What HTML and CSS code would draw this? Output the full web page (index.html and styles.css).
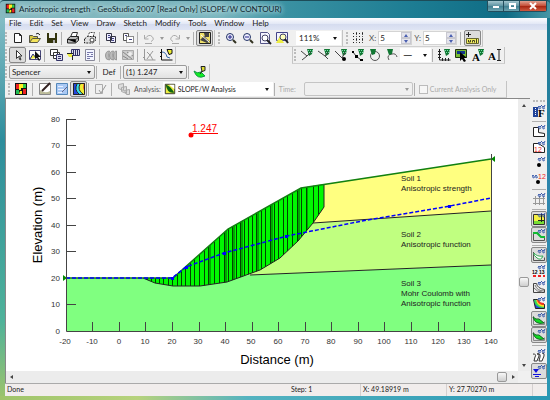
FILE: index.html
```html
<!DOCTYPE html>
<html lang="en">
<head>
    <meta charset="UTF-8">
    <meta name="viewport" content="width=device-width, initial-scale=1.0">
    <title>Anisotropic strength - GeoStudio 2007</title>
    <link rel="stylesheet" href="styles.css">
</head>
<body>

    <!-- Icon shapes -->
    <svg class="defs" aria-hidden="true">
        <symbol id="app" viewBox="0 0 14 14"><path fill="#111" d="M1 1h12v12H1z"/><path fill="#e22" d="M2 2h4v5H2z"/><path fill="#fe2" d="M5 2h4v4H7v2H5z"/><path fill="#3c4" d="M9 2h3v4H9z"/><path fill="#2b5" d="M2 8h3v4H2z"/><path fill="#fe2" d="M6 9h2v3H5z"/><path fill="#e22" d="M9 7h3v5H9z"/></symbol>
        <symbol id="new" viewBox="0 0 14 14"><path fill="#fff" stroke="#222" d="M3.500 2.500h5l2 2v7h-7zM8.500 2.500v2h2"/></symbol>
        <symbol id="open" viewBox="0 0 14 14"><path fill="#d8c840" stroke="#554" d="M1.500 11.500v-7h3l1 1h4v2"/><path fill="#f4e45a" stroke="#554" d="M1.500 11.500l3-4h8l-3 4z"/><path fill="none" stroke="#222" d="M8 3q2-2 4 1"/></symbol>
        <symbol id="save" viewBox="0 0 14 14"><path fill="#33340c" d="M2 2h10v10H2z"/><path fill="#eee" d="M4 2h6v5H4z"/><path fill="#aaa" d="M8 9h2v3H8z"/></symbol>
        <symbol id="print" viewBox="0 0 14 14"><path fill="#fff" stroke="#333" d="M4.500 6l2-4.500h5l-1.500 4.500"/><path fill="#bbb" stroke="#222" d="M1.500 8l3-2.500h8v4l-3 2.500h-8z"/><path stroke="#222" d="M1.500 8.500h8v3M10 8.500l2.500-2.500"/></symbol>
        <symbol id="preview" viewBox="0 0 14 14"><path fill="#fff" stroke="#444" stroke-dasharray="2 1" d="M4.500 6l2-4.500h5l-1.500 4.500"/><path fill="#ddd" stroke="#222" stroke-dasharray="2 1" d="M1.500 8l3-2.500h8v4l-3 2.500h-8z"/><circle cx="9" cy="9" r="2" fill="#fff" stroke="#444"/></symbol>
        <symbol id="copy" viewBox="0 0 14 14"><path fill="#eef" stroke="#334" d="M2.500 2.500h5v7h-5zM6.500 5.500h5v6h-5z"/><path stroke="#448" d="M4 4.500h2M4 6.500h2M8 7.500h2M8 9.500h2"/></symbol>
        <symbol id="copyview" viewBox="0 0 14 14"><path fill="#fff" stroke="#555" d="M2.500 2.500h5v7h-5z"/><path fill="#fff" stroke="#222" stroke-dasharray="1 1" d="M5.500 5.500h7v6h-7z"/><path stroke="#448" d="M4 4.500h2M8 8.500h3"/></symbol>
        <symbol id="undo" viewBox="0 0 14 14"><path fill="none" stroke="#aaa" d="M2.500 4v4h4M3 7.500q4-5 7-2t-1 5M3 12.500h7"/></symbol>
        <symbol id="redo" viewBox="0 0 14 14"><path fill="none" stroke="#aaa" d="M11.500 4v4h-4M11 7.500q-4-5-7-2t1 5M4 12.500h7"/></symbol>
        <symbol id="keyin" viewBox="0 0 14 14"><path fill="#eee06a" stroke="#222" d="M1.500 1.500h11v11h-11z"/><path fill="#444" d="M6 2h5v4H7zM2 9l4-4 6 6-3 1z"/><path stroke="#fff" d="M3 4l8 7"/></symbol>
        <symbol id="zoomin" viewBox="0 0 14 14"><circle cx="6" cy="6" r="3.500" fill="#eef" stroke="#236"/><path stroke="#228" d="M4 6h4M6 4v4"/><path stroke="#332" stroke-width="2" d="M9 9l3 3"/></symbol>
        <symbol id="zoomout" viewBox="0 0 14 14"><circle cx="6" cy="6" r="3.500" fill="#eef" stroke="#236"/><path stroke="#228" d="M4 6h4"/><path stroke="#332" stroke-width="2" d="M9 9l3 3"/></symbol>
        <symbol id="zoompage" viewBox="0 0 14 14"><path fill="#f4f4ff" stroke="#558" d="M2.500 1.500h7l2 2v9h-9z"/><circle cx="7" cy="7" r="3" fill="#fff" stroke="#446"/><path stroke="#222" stroke-width="2" d="M9 9l4 4"/></symbol>
        <symbol id="zoomobj" viewBox="0 0 14 14"><path fill="#f4f4ff" stroke="#448" d="M1.500 1.500h11v8h-11z"/><path fill="#ee4" d="M1 12l4-7 4 7z"/><circle cx="8" cy="6" r="3" fill="#ffb" stroke="#446"/><path stroke="#222" stroke-width="2" d="M10 8l3 4"/></symbol>
        <symbol id="grid" viewBox="0 0 14 14"><path stroke="#222" stroke-dasharray="1 2" d="M1 2.500h12M1 5.500h12M1 8.500h12M1 11.500h12"/><path stroke="#555" stroke-dasharray="1 1" d="M4.500 1v12M10.500 1v12"/></symbol>
        <symbol id="snap" viewBox="0 0 14 14"><path stroke="#222" d="M1 3.500h5M3.500 1v5"/><path fill="#f2ee60" stroke="#663" d="M1.500 7.500h12v5h-12z"/><path fill="none" stroke="#442" d="M3.500 9v2h2v-2M7.500 11.500v-2h2v2M11.500 8v4"/></symbol>
        <symbol id="arrow" viewBox="0 0 14 14"><path fill="#fff" stroke="#333" d="M5.500 2.500v8l2-2 1.500 3.500 1-.5-1.500-3.500h2.500z"/></symbol>
        <symbol id="shape" viewBox="0 0 14 14"><path fill="#fff" stroke="#447" d="M1.500 2.500h11v9h-11z"/><path fill="#ee4" stroke="#338" d="M2 11l3-5 3 4"/><path fill="#111" d="M7 3v8l2-1 2 3 1-1-2-3h3z"/></symbol>
        <symbol id="pages" viewBox="0 0 14 14"><path fill="#fff" stroke="#333" d="M1.500 1.500h7v6h-7zM4.500 4.500h6v6h-6z"/><path fill="#dde" stroke="#336" d="M7.500 6.500h6v6h-6z"/><path stroke="#336" d="M9 8.500h3M9 10.500h3"/></symbol>
        <symbol id="view" viewBox="0 0 14 14"><path fill="#dde" stroke="#336" d="M5.500 1.500h8v6h-8z"/><path stroke="#336" d="M7.500 2v5M9.500 2v5M11.500 2v5"/><path fill="#ee4" d="M1 6h5v3H3z"/><path fill="none" stroke="#222" d="M1 5.500h6M6.500 8v4"/></symbol>
        <symbol id="sheet" viewBox="0 0 14 14"><path fill="#f2f5ff" stroke="#889" d="M2.500 1.500h9v11h-9z"/><path stroke="#77a" d="M4 4.500h6M4 6.500h2M8 6.500h2M4 8.500h6M4 10.500h3"/></symbol>
        <symbol id="layers" viewBox="0 0 14 14"><path fill="#bbb" stroke="#999" d="M1.500 8q0-5 4-5-2 4 0 9-4 0-4-4M5.500 8q0-5 4-5-2 4 0 9-4 0-4-4M9.500 8q0-5 3-5v9q-3 0-3-4"/></symbol>
        <symbol id="hatch" viewBox="0 0 14 14"><path fill="#ccc" stroke="#aaa" d="M1.500 2.500h11v9h-11z"/><path fill="none" stroke="#888" d="M2 4l9 7M2 8l5 3M6 4l6 4"/><circle cx="9" cy="6" r="2" fill="#eee"/></symbol>
        <symbol id="graph" viewBox="0 0 14 14"><path fill="none" stroke="#999" d="M2.500 1v11h11M1 9.500h2M5 11l6-8M5 4q4 3 6 8"/></symbol>
        <symbol id="graphflag" viewBox="0 0 14 14"><path fill="none" stroke="#111" d="M2.500 1v11h11M1 4.500h2M1 8.500h2"/><path fill="none" stroke="#36a" d="M3 4q4 0 5 5l3 1"/><path fill="#ee3" stroke="#111" d="M8 1.500h5v4l-3 1z"/></symbol>
        <symbol id="flag" viewBox="0 0 14 14"><path fill="#173" d="M7 1h6l-1 5-3 2z"/><path stroke="#7da" stroke-dasharray="1 1" d="M8 2.500h5M9 4.500h3"/></symbol>
        <symbol id="draw1" viewBox="0 0 14 14"><use href="#flag"/><path fill="none" stroke="#444" d="M1 3l6 5-5 4M7 8l4-4"/></symbol>
        <symbol id="draw2" viewBox="0 0 14 14"><use href="#flag"/><path fill="none" stroke="#444" d="M1 3l7 5 3-4M8 8l3 3"/></symbol>
        <symbol id="draw3" viewBox="0 0 14 14"><use href="#flag"/><path fill="none" stroke="#444" d="M1 3l7 7 3-6"/><circle cx="10" cy="11" r="2"/></symbol>
        <symbol id="draw4" viewBox="0 0 14 14"><use href="#flag"/><path fill="none" stroke="#444" d="M2 4l3 4 5 4"/><path d="M1 3h2v2H1zM4 7h3v3H4zM9 11h3v2H9z"/></symbol>
        <symbol id="draw5" viewBox="0 0 14 14"><circle cx="7" cy="8" r="4.500" fill="none" stroke="#555"/><path fill="#173" d="M2 1h6L7 6 4 7z"/></symbol>
        <symbol id="draw6" viewBox="0 0 14 14"><path fill="none" stroke="#555" d="M4 12Q1 7 7 6q4-1 5 3"/><path fill="#173" d="M2 1h6L7 6 4 7z"/></symbol>
        <symbol id="axes" viewBox="0 0 14 14"><path fill="none" stroke="#222" d="M2.500 1v11h11M1 3.500h3M1 6.500h3M1 9.500h3M5.500 10v3M8.500 10v3M11.500 10v3"/><use href="#flag"/></symbol>
        <symbol id="picture" viewBox="0 0 14 14"><path fill="#7b3" stroke="#231" d="M1.500 1.500h11v8h-11z"/><path fill="#138" d="M3 3h8v3H3z"/><path d="M6 4v9l2-2 2 3 2-1-2-3h3z"/></symbol>
        <symbol id="leaf" viewBox="0 0 14 14"><path fill="#1e2" stroke="#194" d="M1 6q3 3 7 1l4 4q-8 4-11-5z"/><path fill="#dd3" stroke="#222" d="M8 1.500h4v4l-3 1z"/><path stroke="#222" d="M9 6l-2 3"/></symbol>
        <symbol id="define" viewBox="0 0 14 14"><path fill="#fff" stroke="#888" d="M1.500 1.500h11v11h-11z"/><path fill="#bb9" d="M2 8q5 4 10 1v3H2z"/><path stroke="#322" stroke-width="2" d="M4 9l8-8"/></symbol>
        <symbol id="solve" viewBox="0 0 14 14"><path fill="#a9c8f4" stroke="#58b" d="M1.500 1.500h11v11h-11z"/><path stroke="#e8f0ff" d="M3 4.500h5M3 7.500h6M3 10.500h4"/><path stroke="#668" d="M7 10l5-5"/></symbol>
        <symbol id="contour" viewBox="0 0 14 14"><path fill="#24d" d="M1 1h12v12H1z"/><path fill="#3de" d="M5 1h8v12H7Q2 8 5 1z"/><path fill="#ee3" d="M8 1h5v12h-2Q5 8 8 1z"/><path fill="#e32" d="M12 1h1v9q-3-4-1-9z"/><path fill="none" stroke="#222" d="M1.500 1.500h11v11h-11zM5 2Q2 8 7 12M8 2Q5 8 11 12"/></symbol>
        <symbol id="check" viewBox="0 0 14 14"><path fill="#eee" stroke="#aaa" d="M2.500 2.500h7v9h-7z"/><path fill="none" stroke="#999" d="M6 8l2 3 5-8"/></symbol>
        <symbol id="stack" viewBox="0 0 14 14"><path fill="#ddd" stroke="#aaa" d="M1.500 2.500l5-1v7l-5-2zM4.500 5.500l5-1v7l-5-2zM7.500 8.500l5-1v5h-3z"/></symbol>
        <symbol id="slopew" viewBox="0 0 14 14"><path fill="#ee4" stroke="#222" d="M1.500 1.500h11v11h-11z"/><path fill="#fff" d="M6 2h6v5z"/><path fill="#161" d="M2 2q5 1 10 9Q4 13 2 2z"/></symbol>

        <!-- view toolbar: each icon carries a small pair of glasses -->
        <symbol id="specs" viewBox="0 0 14 14"><path fill="none" stroke="#35a" d="M6 3.500q1-3 2 0t-2 0M10 3.500q1-3 2 0t-2 0M8 3l2-2M12 3l1-2"/></symbol>
        <symbol id="v2" viewBox="0 0 14 14"><path fill="#fff" stroke="#222" d="M1.500 3.500h5v5l6 1v3h-11z"/><use href="#specs"/></symbol>
        <symbol id="v4" viewBox="0 0 14 14"><circle cx="7" cy="9" r="2"/><use href="#specs"/></symbol>
        <symbol id="v6" viewBox="0 0 14 14"><path fill="none" stroke="#999" d="M1 6.500h12M1 11.500h12M3.500 4v9M7.500 4v9M11.500 4v9"/><use href="#specs"/></symbol>
        <symbol id="v7" viewBox="0 0 14 14"><path fill="#f4f044" stroke="#333" d="M1.500 2.500h11v10h-11z"/><path fill="#7d3" d="M2 9h10v3H2z"/><path stroke="#222" d="M9.500 3v7M6 8.500h6"/><use href="#specs"/></symbol>
        <symbol id="v8" viewBox="0 0 14 14"><path fill="#ddd" stroke="#555" d="M1.500 4.500h4l4 5h3v3h-11z"/><path fill="none" stroke="#1b3" stroke-width="2" d="M1 5h4l4 4h4"/><use href="#specs"/></symbol>
        <symbol id="v9" viewBox="0 0 14 14"><path fill="none" stroke="#555" d="M1.500 4v8.500h11v-3"/><path fill="#fff" stroke="#3a5" d="M2 5q3 4 9 3-2 5-6 2T2 5"/><use href="#specs"/></symbol>
        <symbol id="v11" viewBox="0 0 14 14"><path fill="#eee" stroke="#444" d="M1.500 3.500h3q1 5 8 6v3h-11z"/><path fill="none" stroke="#777" d="M3 5q2 6 9 6M2 8q3 4 8 4"/><use href="#specs"/></symbol>
        <symbol id="v12" viewBox="0 0 14 14"><path fill="#24d" stroke="#222" d="M1.500 3.500h4q1 5 7 5v4h-9z"/><path fill="none" stroke="#3d5" stroke-width="2" d="M3 4q1 7 9 7"/><path fill="none" stroke="#fd2" stroke-width="2" d="M5 4q1 5 7 6"/><path fill="none" stroke="#e32" stroke-width="2" d="M6 4q1 4 6 4"/><use href="#specs"/></symbol>
        <symbol id="v13" viewBox="0 0 14 14"><path fill="none" stroke="#888" d="M1.500 4v8.500h11v-3"/><path fill="#1d2" stroke="#162" d="M1 5q3 3 6 2l5 4q-9 2-11-6z"/><use href="#specs"/></symbol>
        <symbol id="v14" viewBox="0 0 14 14"><path fill="#fff" stroke="#333" d="M1 6q4 0 2 3l-1 4h3l2-5q1-3-2-2M5 6q4-1 3 3l-1 4h3l2-5q1-3-2-3"/><use href="#specs"/></symbol>
        <symbol id="v15" viewBox="0 0 14 14"><path fill="#11d" d="M1 5h6L4 9z"/><path stroke="#11d" d="M1 10.500h8M3 12.500h4"/><use href="#specs"/></symbol>
    </svg>

    <header class="titlebar">
        <svg class="icon"><use href="#app"/></svg>
        <h1>Anisotropic strength - GeoStudio 2007 [Read Only] (SLOPE/W CONTOUR)</h1>
        <div class="winbuttons">
            <button aria-label="Minimize"><svg viewBox="0 0 10 8"><path fill="#fff" d="M2 4h6v2H2z"/></svg></button>
            <button aria-label="Maximize"><svg viewBox="0 0 10 8"><path fill="none" stroke="#fff" stroke-width="2" d="M3 2h5v4H3z"/></svg></button>
            <button class="close" aria-label="Close"><svg viewBox="0 0 10 8"><path stroke="#fff" stroke-width="2" d="M2 1l6 6M8 1L2 7"/></svg></button>
        </div>
    </header>

    <div class="window">
        <nav class="menu">
            <a href="#">File</a><a href="#">Edit</a><a href="#">Set</a><a href="#">View</a><a href="#">Draw</a><a href="#">Sketch</a><a href="#">Modify</a><a href="#">Tools</a><a href="#">Window</a><a href="#">Help</a>
        </nav>

        <!-- Standard, zoom and grid toolbars -->
        <div class="row">
            <div class="toolbar">
                <i class="grip"></i>
                <button aria-label="New"><svg class="icon"><use href="#new"/></svg></button>
                <button aria-label="Open"><svg class="icon"><use href="#open"/></svg></button>
                <button aria-label="Save"><svg class="icon"><use href="#save"/></svg></button>
                <i class="sep"></i>
                <button aria-label="Print"><svg class="icon"><use href="#print"/></svg></button>
                <button aria-label="Print selection"><svg class="icon"><use href="#preview"/></svg></button>
                <i class="sep"></i>
                <button aria-label="Copy"><svg class="icon"><use href="#copy"/></svg></button>
                <button aria-label="Copy view"><svg class="icon"><use href="#copyview"/></svg></button>
                <i class="sep"></i>
                <button aria-label="Undo"><svg class="icon"><use href="#undo"/></svg></button>
                <button class="drop" aria-label="Undo list"></button>
                <button aria-label="Redo"><svg class="icon"><use href="#redo"/></svg></button>
                <button class="drop" aria-label="Redo list"></button>
                <i class="sep"></i>
                <button class="on" aria-label="Key in"><svg class="icon"><use href="#keyin"/></svg></button>
            </div>
            <div class="toolbar">
                <i class="grip"></i>
                <button aria-label="Zoom in"><svg class="icon"><use href="#zoomin"/></svg></button>
                <button aria-label="Zoom out"><svg class="icon"><use href="#zoomout"/></svg></button>
                <button aria-label="Zoom page"><svg class="icon"><use href="#zoompage"/></svg></button>
                <button aria-label="Zoom objects"><svg class="icon"><use href="#zoomobj"/></svg></button>
                <span class="combo plain zoom"><select aria-label="Zoom"><option>111%</option></select></span>
            </div>
            <div class="toolbar">
                <i class="grip"></i>
                <button aria-label="Grid"><svg class="icon"><use href="#grid"/></svg></button>
                <label for="gridx">X:</label>
                <span class="spin"><input type="text" id="gridx" value="5"><span class="updown"><button aria-label="X up"></button><button class="down" aria-label="X down"></button></span></span>
                <label for="gridy">Y:</label>
                <span class="spin"><input type="text" id="gridy" value="5"><span class="updown"><button aria-label="Y up"></button><button class="down" aria-label="Y down"></button></span></span>
                <i class="sep wide"></i>
                <button class="on" aria-label="Snap"><svg class="icon"><use href="#snap"/></svg></button>
            </div>
        </div>

        <!-- Mode and sketch toolbars -->
        <div class="row">
            <div class="toolbar">
                <i class="grip"></i>
                <button class="on" aria-label="Select"><svg class="icon"><use href="#arrow"/></svg></button>
                <button aria-label="Modify objects"><svg class="icon"><use href="#shape"/></svg></button>
                <i class="sep"></i>
                <button aria-label="Analyses"><svg class="icon"><use href="#pages"/></svg></button>
                <button aria-label="View info"><svg class="icon"><use href="#view"/></svg></button>
                <button aria-label="Report"><svg class="icon"><use href="#sheet"/></svg></button>
                <i class="sep"></i>
                <button aria-label="Layers"><svg class="icon"><use href="#layers"/></svg></button>
                <button aria-label="Contours"><svg class="icon"><use href="#hatch"/></svg></button>
                <i class="sep"></i>
                <button aria-label="Graph"><svg class="icon"><use href="#graph"/></svg></button>
                <button aria-label="Draw graph"><svg class="icon"><use href="#graphflag"/></svg></button>
            </div>
            <div class="toolbar sketch">
                <i class="grip"></i>
                <button aria-label="Sketch lines"><svg class="icon"><use href="#draw1"/></svg></button>
                <button aria-label="Sketch arrow"><svg class="icon"><use href="#draw2"/></svg></button>
                <button aria-label="Sketch point"><svg class="icon"><use href="#draw3"/></svg></button>
                <button aria-label="Sketch polyline"><svg class="icon"><use href="#draw4"/></svg></button>
                <button aria-label="Sketch circle"><svg class="icon"><use href="#draw5"/></svg></button>
                <button aria-label="Sketch arc"><svg class="icon"><use href="#draw6"/></svg></button>
                <span class="combo plain line"><select aria-label="Line style"><option>—</option></select></span>
                <i class="sep"></i>
                <button aria-label="Sketch axes"><svg class="icon"><use href="#axes"/></svg></button>
                <button aria-label="Picture"><svg class="icon"><use href="#picture"/></svg></button>
                <button aria-label="Sketch text"><svg class="icon" viewBox="0 0 14 14"><text class="glyph" x="1" y="13">A</text><use href="#flag"/></svg></button>
                <button aria-label="Edit text"><svg class="icon" viewBox="0 0 14 14"><text class="glyph" x="0" y="12">A</text><path fill="none" stroke="#222" d="M9 1.500h4M11 2v10M9 12.500h4"/></svg></button>
            </div>
        </div>

        <!-- Method toolbar -->
        <div class="row">
            <div class="toolbar">
                <i class="grip"></i>
                <span class="combo method"><select aria-label="Method"><option>Spencer</option></select></span>
                <i class="sep"></i>
                <button class="def">Def</button>
                <i class="sep"></i>
                <span class="combo slip"><select aria-label="Slip surface"><option>(1) 1.247</option></select></span>
                <i class="sep"></i>
                <button aria-label="Draw slip surfaces"><svg class="icon"><use href="#leaf"/></svg></button>
            </div>
        </div>

        <!-- Analysis toolbar -->
        <div class="row">
            <div class="toolbar analysis">
                <i class="grip"></i>
                <button aria-label="GeoStudio"><svg class="icon"><use href="#app"/></svg></button>
                <i class="sep wide"></i>
                <button aria-label="Define"><svg class="icon"><use href="#define"/></svg></button>
                <button aria-label="Solve"><svg class="icon"><use href="#solve"/></svg></button>
                <button class="on" aria-label="Contour"><svg class="icon"><use href="#contour"/></svg></button>
                <i class="sep"></i>
                <button aria-label="Verify"><svg class="icon"><use href="#check"/></svg></button>
                <i class="sep wide"></i>
                <button aria-label="Analyses"><svg class="icon"><use href="#stack"/></svg></button>
                <label for="analysis">Analysis:</label>
                <span class="combo plain run"><svg class="icon"><use href="#slopew"/></svg><select id="analysis"><option>SLOPE/W Analysis</option></select></span>
                <i class="sep"></i>
                <label class="off" for="time">Time:</label>
                <span class="combo time"><select id="time" disabled><option></option></select></span>
                <i class="sep"></i>
                <label class="off current"><input type="checkbox" disabled>Current Analysis Only</label>
            </div>
        </div>

        <main>
            <div class="view">
                <div class="canvas">
                    <svg class="chart" viewBox="6 99 512 272">
                        <!-- soil regions -->
                        <path fill="#80ff80" d="M66 278h107l77-3 241-10v66H66z"/>
                        <path fill="#c0ff80" d="M247 275L313 223l178-12v54z"/>
                        <path fill="#ffff80" d="M313 223l11-39 167-25v52z"/>
                        <path class="edge" d="M313 223l178-12M250 275l241-10"/>

                        <!-- sliding mass and its slices -->
                        <clipPath id="mass"><path d="M143 278h30l55-49 73-41 23-4v23l-11 16-15 18-18 17-20 12-33 12-27 4h-27l-18-3z"/></clipPath>
                        <g clip-path="url(#mass)">
                            <path fill="#00f800" d="M140 180h190v110H140z"/>
                            <path class="bands" d="M210 180v110M226 180v110M234 180v110M242 180v110M258 180v110M272 180v110M299 180v110M307 180v110"/>
                            <path class="slices" d="M147.500 180v110M151.500 180v110M155.500 180v110M159.500 180v110M163.500 180v110M168.500 180v110M172.500 180v110M177.500 180v110M181.500 180v110M185.500 180v110M190.500 180v110M194.500 180v110M199.500 180v110M204.500 180v110M208.500 180v110M214.500 180v110M219.500 180v110M224.500 180v110M228.500 180v110M232.500 180v110M236.500 180v110M240.500 180v110M244.500 180v110M248.500 180v110M252.500 180v110M256.500 180v110M261.500 180v110M265.500 180v110M270.500 180v110M274.500 180v110M278.500 180v110M283.500 180v110M287.500 180v110M292.500 180v110M297.500 180v110M301.500 180v110M306.500 180v110M313.500 180v110M318.500 180v110"/>
                        </g>
                        <path class="edge" d="M143 278l12 5 18 3h27l27-4 33-12 20-12 18-17 15-18 11-16v-23"/>
                        <path class="ground" d="M66 278h107l55-49 73-41 190-29"/>
                        <path fill="#080" d="M491 159l4-3v6zM63 275l4 3-4 3z"/>

                        <!-- water line -->
                        <path class="water" d="M66 278h106l14-11 38-14 26-7 37-10 75-15 88-15 41-8"/>
                        <path fill="#00f" d="M171 277h3v3h-3zM185 266h3v3h-3zM223 252h3v3h-3zM285 235h3v3h-3zM448 205h3v3h-3z"/>

                        <path class="axis" d="M66.500 119v212.500h425V154M66 119.500h10M66 145.500h10M66 172.500h10M66 198.500h10M66 225.500h10M66 251.500h10M66 304.500h10M92.500 322v9M119.500 322v9M145.500 322v9M172.500 322v9M199.500 322v9M225.500 322v9M252.500 322v9M278.500 322v9M305.500 322v9M331.500 322v9M358.500 322v9M384.500 322v9M411.500 322v9M438.500 322v9M464.500 322v9"/>
                        <g class="ticks end">
                            <text x="60" y="122">80</text><text x="60" y="148">70</text><text x="60" y="175">60</text><text x="60" y="201">50</text><text x="60" y="228">40</text><text x="60" y="254">30</text><text x="60" y="281">20</text><text x="60" y="307">10</text><text x="60" y="334">0</text>
                        </g>
                        <g class="ticks mid">
                            <text x="65" y="344">-20</text><text x="92" y="344">-10</text><text x="119" y="344">0</text><text x="145" y="344">10</text><text x="172" y="344">20</text><text x="198" y="344">30</text><text x="225" y="344">40</text><text x="251" y="344">50</text><text x="278" y="344">60</text><text x="305" y="344">70</text><text x="331" y="344">80</text><text x="358" y="344">90</text><text x="384" y="344">100</text><text x="411" y="344">110</text><text x="438" y="344">120</text><text x="464" y="344">130</text><text x="491" y="344">140</text>
                        </g>
                        <text class="title" x="277" y="364">Distance (m)</text>
                        <text class="title" transform="translate(42 225) rotate(-90)">Elevation (m)</text>
                        <g class="soil">
                            <text x="401" y="181">Soil 1</text><text x="401" y="191">Anisotropic strength</text>
                            <text x="401" y="237">Soil 2</text><text x="401" y="247">Anisotropic function</text>
                            <text x="401" y="286">Soil 3</text><text x="401" y="296">Mohr Coulomb with</text><text x="401" y="306">Anisotropic function</text>
                        </g>
                        <circle cx="191" cy="135" r="2.500" fill="#f00"/>
                        <text class="factor" x="192" y="132">1.247</text>
                        <path stroke="#f00" d="M192 133.500h26"/>
                    </svg>
                </div>
                <div class="vscroll"><i class="arr up"></i><i class="thumb"></i><i class="arr dn"></i></div>
                <div class="hscroll"><i class="arr lt"></i><i class="thumb"></i><i class="arr rt"></i></div>
            </div>
            <div class="side">
                <i class="hgrip"></i>
                <button aria-label="View preferences"><svg class="icon" viewBox="0 0 14 14"><path fill="#249" d="M1 3h5v10H1z"/><path stroke="#fff" stroke-dasharray="1 1" d="M3.500 4v8"/><text class="glyph" x="6" y="13">F</text><use href="#specs"/></svg></button>
                <i class="hsep"></i>
                <button aria-label="Regions"><svg class="icon"><use href="#v2"/></svg></button>
                <button aria-label="Region numbers"><svg class="icon" viewBox="0 0 14 14"><path fill="#fff" stroke="#222" d="M1.500 3.500h5l6 4v5h-11z"/><text class="mini" x="2" y="12">12</text><use href="#specs"/></svg></button>
                <button aria-label="Points"><svg class="icon"><use href="#v4"/></svg></button>
                <button aria-label="Point numbers"><svg class="icon" viewBox="0 0 14 14"><path fill="none" stroke="#35a" d="M0 4.500q1-3 2 0t-2 0M3 4.500q1-3 2 0t-2 0"/><text class="mini" x="6" y="7">12</text><circle cx="6" cy="10" r="2"/></svg></button>
                <i class="hsep"></i>
                <button aria-label="Grid"><svg class="icon"><use href="#v6"/></svg></button>
                <i class="hsep"></i>
                <button class="on" aria-label="Materials"><svg class="icon"><use href="#v7"/></svg></button>
                <button class="on" aria-label="Surface"><svg class="icon"><use href="#v8"/></svg></button>
                <i class="hsep"></i>
                <button class="on" aria-label="Slip surface"><svg class="icon"><use href="#v9"/></svg></button>
                <button aria-label="Numbers"><svg class="icon" viewBox="0 0 14 14"><text class="micro" x="0" y="10">12 13</text><path stroke="#e22" stroke-width="2" stroke-dasharray="3 2" d="M1 12h12"/><use href="#specs"/></svg></button>
                <button aria-label="Contours"><svg class="icon"><use href="#v11"/></svg></button>
                <button aria-label="Shading"><svg class="icon"><use href="#v12"/></svg></button>
                <button class="on" aria-label="Slip mass"><svg class="icon"><use href="#v13"/></svg></button>
                <button class="on" aria-label="Slices"><svg class="icon"><use href="#v13"/></svg></button>
                <i class="hsep"></i>
                <button aria-label="Slip surfaces"><svg class="icon"><use href="#v14"/></svg></button>
                <button class="on" aria-label="Water table"><svg class="icon"><use href="#v15"/></svg></button>
            </div>
        </main>

        <footer>
            <span class="done">Done</span>
            <span class="step">Step: 1</span>
            <span class="pos">X: 49.18919 m</span>
            <span class="pos">Y: 27.70270 m</span>
            <span class="size"></span>
        </footer>
    </div>

</body>
</html>
```
FILE: styles.css
```css
* {
    box-sizing: border-box;
}
body {
    margin: 0;
    min-height: 100vh;
    display: flex;
    flex-direction: column;
    padding: 0 3px 5px 5px;
    font-family: Lato, "Liberation Sans", sans-serif;
    font-size: 8px;
    line-height: 10px;
    color: #222;
    background: linear-gradient(90deg, #9fc46a, #b7d27c 25%, #55b3c0 45%, #2a98b4) bottom / 100% 5px no-repeat,
        linear-gradient(#8fc3cb, #2d8d9c 35%, #4fb29a 80%, #9fc46a) left / 5px 100% no-repeat,
        linear-gradient(#1b7a90, #2f86ae 50%, #2a98b4) right / 4px 100% no-repeat,
        #2c8a9c;
}
.defs {
    position: absolute;
    width: 0;
    height: 0;
}
button {
    margin: 0;
    padding: 0;
    border: 0;
    background: none;
    font: inherit;
    color: inherit;
}
.icon {
    width: 14px;
    height: 14px;
    flex: none;
    display: block;
}
.glyph {
    font: bold 11px "Liberation Serif", serif;
}
.mini {
    font: 7px "Liberation Sans", sans-serif;
    fill: #e22;
}
.micro {
    font: bold 5px "Liberation Sans", sans-serif;
}

/* title bar */
.titlebar {
    height: 18px;
    margin: 0 -3px 0 -5px;
    padding: 0 3px 2px 5px;
    display: flex;
    align-items: center;
    gap: 3px;
    border-top: 1px solid #1d4c58;
    border-radius: 4px 4px 0 0;
    background: linear-gradient(90deg, #86b8bf, #79b5be 40%, #3a91a2 52%, #1d7d93 75%, #0f6c85 92%, #4796a5);
}
.titlebar .icon {
    width: 11px;
    height: 11px;
}
h1 {
    flex: 1;
    margin: 0;
    font-size: 8px;
    font-weight: normal;
    color: #102830;
    text-shadow: 0 0 4px #cfe8ea, 0 0 6px #cfe8ea;
}
.winbuttons {
    display: flex;
    align-self: flex-start;
    border: 1px solid #234d5c;
    border-top: 0;
    border-radius: 0 0 3px 3px;
}
.winbuttons button {
    width: 16px;
    height: 10px;
    background: linear-gradient(#a3c5cd, #5c93a2 50%, #3f7f90 50%, #6da4b1);
    border-right: 1px solid #234d5c;
}
.winbuttons .close {
    width: 26px;
    border-right: 0;
    background: linear-gradient(#dfa292, #c44a33 50%, #a5230f 50%, #cf5a40);
}
.winbuttons svg {
    width: 10px;
    height: 8px;
    display: block;
    margin: 0 auto;
}

/* client window */
.window {
    flex: 1;
    display: flex;
    flex-direction: column;
    background: #f0f0f0;
}
.menu {
    height: 12px;
    padding-left: 4px;
    display: flex;
    gap: 8px;
    line-height: 11px;
    background: linear-gradient(#fdfdff, #e2e7f5 50%, #d5dcef 50%, #dfe5f4);
}
.menu a {
    color: #222;
    text-decoration: none;
}
.row {
    display: flex;
    height: 17px;
}
.toolbar {
    display: flex;
    align-items: center;
    padding-right: 1px;
    border-right: 1px solid #c4c4c4;
    border-bottom: 1px solid #d0d0d0;
}
.toolbar + .toolbar {
    padding-left: 3px;
}
.toolbar.sketch {
    margin-left: 116px;
    padding-left: 1px;
    border-left: 1px solid #c4c4c4;
}
.toolbar.analysis {
    padding-left: 3px;
    font-size: 7px;
}
.toolbar button {
    width: 17px;
    height: 16px;
    display: flex;
    align-items: center;
    justify-content: center;
}
.toolbar .drop {
    width: 9px;
}
.drop::before {
    content: "";
    border: 2px solid transparent;
    border-top: 3px solid #999;
    border-bottom: 0;
}
.toolbar .on,
.side .on {
    background: #dcdcdc;
    border: 1px solid #888;
    border-radius: 2px;
}
.grip {
    width: 3px;
    height: 12px;
    margin-right: 1px;
    border-left: 2px dotted #bbb;
}
.sep {
    width: 1px;
    height: 13px;
    margin: 0 2px 0 1px;
    background: #b0b0b0;
}
.sep.wide {
    margin: 0 3px;
}
.toolbar label {
    margin: 0 2px;
    color: #555;
}
.toolbar .off {
    color: #aaa;
}

/* combos and spin boxes */
.combo {
    position: relative;
    display: flex;
    align-items: center;
    height: 14px;
    background: linear-gradient(#f6f6f6, #e2e2e2);
    border: 1px solid #999;
    border-radius: 2px;
}
.combo.plain {
    background: #fff;
    border-color: #fff;
    border-radius: 0;
}
.combo::after {
    content: "";
    position: absolute;
    right: 3px;
    top: 5px;
    border: 2px solid transparent;
    border-top: 3px solid #111;
    border-bottom: 0;
}
.combo select {
    appearance: none;
    flex: 1;
    min-width: 0;
    height: 12px;
    margin: 0;
    padding: 0 8px 0 2px;
    border: 0;
    background: none;
    font: inherit;
    color: #222;
}
.zoom {
    width: 45px;
    margin-left: 6px;
}
.line {
    width: 31px;
}
.line select {
    font-size: 12px;
}
.method {
    width: 86px;
}
.slip {
    width: 64px;
}
.run {
    width: 110px;
}
.run .icon {
    width: 12px;
    height: 12px;
}
.time {
    width: 109px;
    margin-left: 6px;
    background: #f0f0f0;
    border-color: #c4c4c4;
}
.time::after {
    border-top-color: #999;
}
.toolbar .def {
    width: 20px;
}
.current {
    display: flex;
    align-items: center;
    gap: 2px;
    padding-right: 7px;
}
.current input {
    appearance: none;
    width: 9px;
    height: 9px;
    margin: 0;
    border: 1px solid #bbb;
    background: #f6f6f6;
}
.spin {
    display: flex;
    width: 34px;
    height: 14px;
    background: #fff;
    border: 1px solid #d4d4d4;
}
.spin input {
    flex: 1;
    min-width: 0;
    padding: 0 1px;
    border: 0;
    font: inherit;
    color: #222;
}
.spin .updown {
    width: 10px;
}
.toolbar .updown button {
    width: 10px;
    height: 6px;
    background: #e4e4ec;
    border: 1px solid #c8c8d0;
}
.updown button::before {
    content: "";
    border: 2px solid transparent;
    border-bottom: 3px solid #4a5fb0;
    border-top: 0;
}
.updown .down::before {
    border-bottom: 0;
    border-top: 3px solid #4a5fb0;
}

/* drawing area */
main {
    flex: 1;
    display: flex;
}
.view {
    flex: 1;
    display: grid;
    grid-template-columns: 1fr 12px;
    grid-template-rows: 1fr 12px;
    border-top: 1px solid #888;
    border-left: 1px solid #888;
}
.canvas {
    background: #fff;
}
.chart {
    display: block;
    width: 100%;
    font-family: "Liberation Sans", sans-serif;
}
.edge {
    fill: none;
    stroke: #222;
}
.slices {
    stroke: #040;
}
.bands {
    stroke: #00a800;
    stroke-width: 2px;
}
.ground {
    fill: none;
    stroke: #118011;
    stroke-width: 1.5px;
}
.water {
    fill: none;
    stroke: #00f;
    stroke-width: 1.5px;
    stroke-dasharray: 4 2;
}
.axis {
    fill: none;
    stroke: #444;
}
.ticks {
    font-size: 8px;
    fill: #333;
}
.end {
    text-anchor: end;
}
.mid {
    text-anchor: middle;
}
.title {
    font-size: 13px;
    text-anchor: middle;
}
.soil {
    font-size: 8px;
    fill: #222;
}
.factor {
    font-size: 10px;
    fill: #f00;
}

/* scroll bars */
.vscroll,
.hscroll {
    display: flex;
    align-items: center;
    justify-content: space-between;
    background: #ececec;
}
.vscroll {
    flex-direction: column;
    padding: 5px 0 4px;
}
.hscroll {
    padding: 0 3px 0 4px;
}
.thumb {
    width: 10px;
    height: 10px;
    background: linear-gradient(#f8f8f8, #cfcfcf);
    border: 1px solid #999;
    border-radius: 2px;
}
.vscroll .thumb {
    margin-top: 92px;
}
.hscroll .thumb {
    margin: 0 5px 0 auto;
}
.arr {
    border: 2px solid transparent;
}
.up {
    border-bottom: 3px solid #444;
    border-top: 0;
}
.dn {
    border-top: 3px solid #444;
    border-bottom: 0;
}
.lt {
    border-right: 3px solid #444;
    border-left: 0;
}
.rt {
    border-left: 3px solid #444;
    border-right: 0;
}

/* view toolbar on the right */
.side {
    width: 17px;
    display: flex;
    flex-direction: column;
    align-items: center;
    padding-top: 2px;
}
.side button {
    width: 16px;
    height: 16px;
    display: flex;
    align-items: center;
    justify-content: center;
}
.hgrip {
    width: 12px;
    height: 2px;
    margin-bottom: 1px;
    border-top: 2px dotted #bbb;
}
.hsep {
    width: 14px;
    height: 1px;
    margin: 2px 0 1px;
    background: #b0b0b0;
}

/* status bar */
footer {
    display: flex;
    height: 13px;
    font-size: 7px;
    line-height: 11px;
    border-top: 1px solid #aaa;
    background: #f1edec;
}
footer span {
    border-right: 1px solid #d4d0d0;
    padding-left: 2px;
}
.done {
    flex: 1;
}
footer .done {
    border-right: 0;
}
.step {
    width: 72px;
}
.pos {
    width: 86px;
}
footer .size {
    width: 14px;
    border-right: 0;
}
```
